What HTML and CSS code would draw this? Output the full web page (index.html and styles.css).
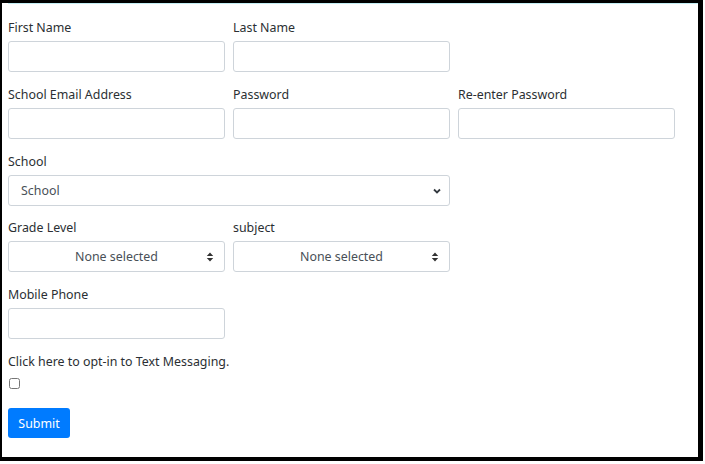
FILE: index.html
```html
<!DOCTYPE html>
<html lang="en">
<head>
    <meta charset="UTF-8">
    <meta name="viewport" content="width=device-width, initial-scale=1.0">
    <title>Teacher Registration</title>
    <link rel="stylesheet" href="styles.css">
</head>
<body>
    <div class="frame">
        <div class="top-line"></div>
        <form class="signup">
            <div class="row">
                <div class="field">
                    <label for="first">First Name</label>
                    <input type="text" id="first">
                </div>
                <div class="field">
                    <label for="last">Last Name</label>
                    <input type="text" id="last">
                </div>
            </div>

            <div class="row">
                <div class="field">
                    <label for="email">School Email Address</label>
                    <input type="email" id="email">
                </div>
                <div class="field">
                    <label for="pass">Password</label>
                    <input type="password" id="pass">
                </div>
                <div class="field">
                    <label for="pass2">Re-enter Password</label>
                    <input type="password" id="pass2">
                </div>
            </div>

            <div class="row">
                <div class="field wide">
                    <label for="school">School</label>
                    <select id="school">
                        <option value="">School</option>
                    </select>
                </div>
            </div>

            <div class="row">
                <div class="field">
                    <label>Grade Level</label>
                    <button type="button" class="multi">
                        <span>None selected</span>
                        <svg class="caret" width="8" height="10" viewBox="0 0 8 10"><path d="M4 0.5 L7.2 4 H0.8 Z M4 9.5 L7.2 6 H0.8 Z" fill="#333"/></svg>
                    </button>
                </div>
                <div class="field">
                    <label>subject</label>
                    <button type="button" class="multi">
                        <span>None selected</span>
                        <svg class="caret" width="8" height="10" viewBox="0 0 8 10"><path d="M4 0.5 L7.2 4 H0.8 Z M4 9.5 L7.2 6 H0.8 Z" fill="#333"/></svg>
                    </button>
                </div>
            </div>

            <div class="row">
                <div class="field">
                    <label for="phone">Mobile Phone</label>
                    <input type="tel" id="phone">
                </div>
            </div>

            <label for="optin" class="optin">Click here to opt-in to Text Messaging.</label>
            <input type="checkbox" id="optin" class="check">

            <button type="submit" class="submit">Submit</button>
        </form>
    </div>
</body>
</html>
```

FILE: styles.css
```css
body {
    margin: 0;
    background: #fff;
    font-family: "Noto Sans", Arial, sans-serif;
    font-size: 12.4px;
    color: #2b2f33;
}
.frame {
    width: 703px;
    height: 461px;
    box-sizing: border-box;
    border-style: solid;
    border-color: #000;
    border-width: 3px 5px 4px 2px;
}
.top-line {
    margin-left: 6px;
    border-top: 1px solid #c4eef4;
}
.signup {
    padding: 14px 6px 0;
}
.row {
    display: flex;
    gap: 8px;
}
.field {
    width: 217px;
    margin-bottom: 13px;
}
.field.wide {
    width: 442px;
    margin-bottom: 12px;
}
label {
    display: block;
    line-height: 20px;
    margin-bottom: 3px;
}
input[type="text"], input[type="email"], input[type="password"], input[type="tel"], select, .multi {
    display: block;
    width: 100%;
    height: 31px;
    box-sizing: border-box;
    border: 1px solid #ced4da;
    border-radius: 3px;
    background: #fff;
    font-family: inherit;
    font-size: 12.4px;
    color: #495057;
    margin: 0;
}
select {
    appearance: none;
    padding: 0 12px;
    background: #fff url("data:image/svg+xml,%3Csvg xmlns='http://www.w3.org/2000/svg' width='8' height='6' viewBox='0 0 8 6'%3E%3Cpath d='M1 1.5 L4 4.5 L7 1.5' fill='none' stroke='%23343a40' stroke-width='1.8'/%3E%3C/svg%3E") no-repeat right 8px center;
}
.multi {
    display: flex;
    align-items: center;
    justify-content: center;
    position: relative;
    padding: 0;
    cursor: pointer;
}
.multi .caret {
    position: absolute;
    right: 10px;
    top: 10px;
}
.optin {
    margin-bottom: 6px;
}
.check {
    display: block;
    width: 11px;
    height: 11px;
    margin: 0 0 19px 1px;
}
.submit {
    display: block;
    width: 62px;
    height: 30px;
    padding: 0;
    background: #007bff;
    color: #fff;
    border: none;
    border-radius: 3px;
    font-family: inherit;
    font-size: 12.4px;
    cursor: pointer;
}
```
